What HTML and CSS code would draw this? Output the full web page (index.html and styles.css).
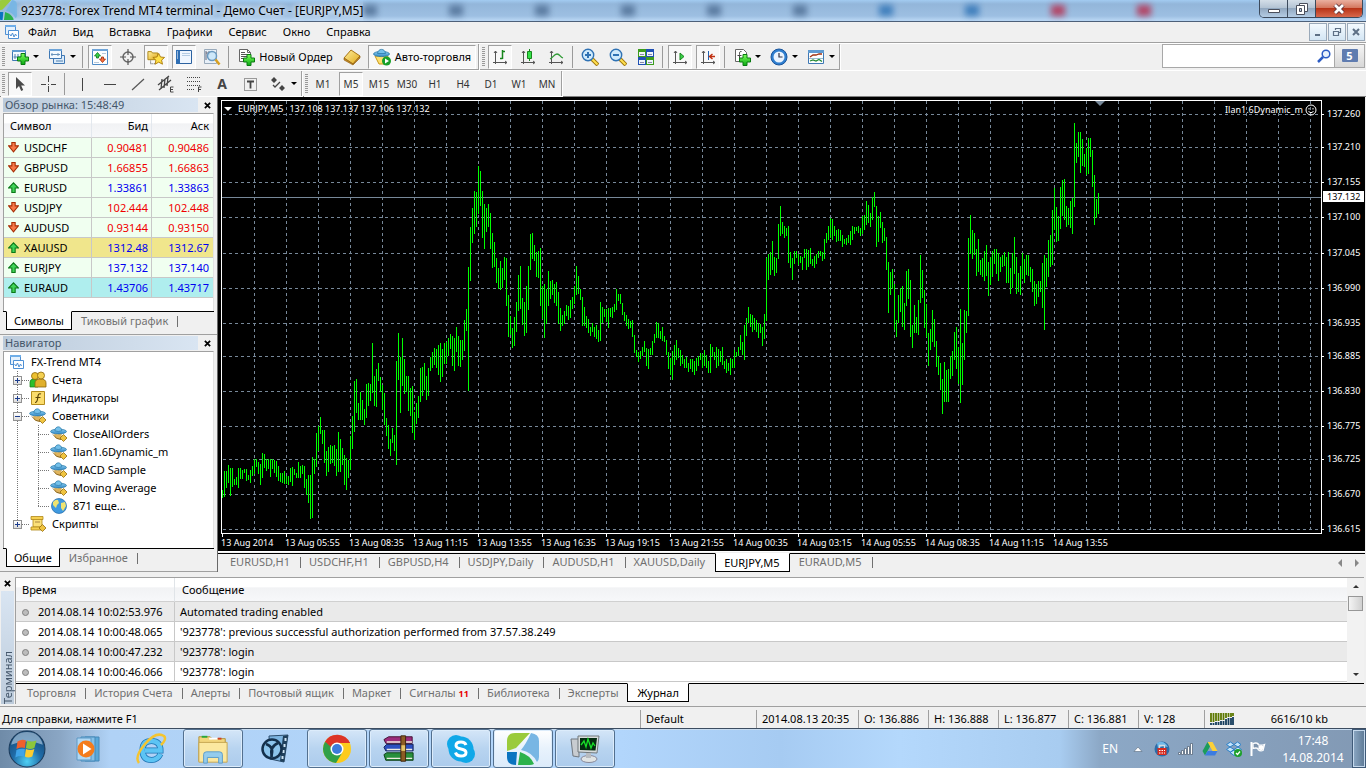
FILE: index.html
```html
<!DOCTYPE html>
<html lang="ru">
<head>
<meta charset="utf-8">
<title>923778: Forex Trend MT4 terminal</title>
<link rel="stylesheet" href="styles.css">
</head>
<body>
<svg class="sprite" aria-hidden="true">
  <defs>
    <linearGradient id="g-plus" x1="0" y1="0" x2="0" y2="1"><stop offset="0" stop-color="#7dff5a"/><stop offset="1" stop-color="#0aa814"/></linearGradient>
    <linearGradient id="g-gold" x1="0" y1="0" x2="1" y2="1"><stop offset="0" stop-color="#fff0a0"/><stop offset="1" stop-color="#e0a818"/></linearGradient>
    <linearGradient id="g-blue" x1="0" y1="0" x2="0" y2="1"><stop offset="0" stop-color="#8fd0f4"/><stop offset="1" stop-color="#2e86c4"/></linearGradient>
    <radialGradient id="g-orb" cx=".5" cy=".85" r=".8"><stop offset="0" stop-color="#4fd0f4"/><stop offset=".5" stop-color="#1f6ca8"/><stop offset="1" stop-color="#174a78"/></radialGradient>
  </defs>
  <symbol id="i-plus" viewBox="0 0 12 12"><path d="M4 .5h4V4h3.500v4H8v3.500H4V8H.5V4H4z" fill="url(#g-plus)" stroke="#087a10"/></symbol>
  <symbol id="i-newchart" viewBox="0 0 18 18"><path d="M1.500 2.500h13v10h-13z" fill="#f4faff" stroke="#3f78b4"/><path d="M1 2h14v2H1z" fill="#5f9ad0"/><path d="M4 6v5M2.500 9h9M7 6v3" stroke="#5080b0" fill="none"/><use href="#i-plus" x="6" y="5" width="12" height="12"/></symbol>
  <symbol id="i-profiles" viewBox="0 0 18 18"><path d="M5.500 7.500h11v8h-11z" fill="#dcecfa" stroke="#3f78b4"/><path d="M1.500 1.500h12v9h-12z" fill="#f4faff" stroke="#3f78b4"/><path d="M1 1h13v2H1z" fill="#6ea4d8"/><path d="M3 6.500h9M4 5v3M10 5v3" stroke="#6a94bc"/><path d="M8 13h7" stroke="#5080b0"/></symbol>
  <symbol id="i-watch" viewBox="0 0 18 18"><path d="M1.500 1.500h15v15h-15z" fill="#fdfeff" stroke="#4f8cc8"/><path d="M1 1h16v2H1z" fill="#6ea4d8"/><path d="M11 5.500h4M3 14.500h5" stroke="#b8c8d8"/><path d="M6.500 4.500L9.500 8h-2v2h-2V8h-2z" fill="#38d048" stroke="#0a7818" stroke-width=".8"/><path d="M11.500 14.500l3-3.500h-2V9h-2v2h-2z" fill="#f87040" stroke="#a02c08" stroke-width=".8"/></symbol>
  <symbol id="i-target" viewBox="0 0 18 18"><circle cx="9" cy="9" r="5" fill="none" stroke="#666" stroke-width="1.400"/><path d="M9 1v6M9 11v6M1 9h6M11 9h6" stroke="#555" stroke-width="1.200"/></symbol>
  <symbol id="i-star" viewBox="0 0 20 18"><path d="M1 3h4l1 1.500h6V12H1z" fill="url(#g-gold)" stroke="#a88010"/><path d="M4 13v4M4 16.500h6" stroke="#444" stroke-dasharray="1 1"/><path d="M13 5l2 4 4.500.5-3.300 3 1 4.500-4.200-2.300L9 17l.9-4.500-3.400-3L11 9z" fill="#ffe048" stroke="#a87808"/></symbol>
  <symbol id="i-terminal" viewBox="0 0 18 18"><path d="M1.500 2.500h15v13h-15z" fill="#eef6ff" stroke="#2c62a0"/><path d="M1 2h4v14H1z" fill="#2f6fb4"/><path d="M2 4h1M2 6h1M2 8h1M2 10h1" stroke="#fff"/><path d="M7 5.500h8M7 7.500h8" stroke="#b4cce4"/></symbol>
  <symbol id="i-tester" viewBox="0 0 18 18"><path d="M1.500 1.500h12v14h-12z" fill="#e8f0f8" stroke="#9ab" /><path d="M3 3v9M3 5h3M6 3v4" stroke="#667"/><circle cx="9" cy="8" r="4.500" fill="#c8e6fa" fill-opacity=".85" stroke="#6a9ac0" stroke-width="1.500"/><path d="M12.500 11.500l4 5" stroke="#d8a020" stroke-width="2.500"/></symbol>
  <symbol id="i-order" viewBox="0 0 18 18"><path d="M2.500 1.500h8l3 3v9h-11z" fill="#fff" stroke="#666"/><path d="M10.500 1.500v3h3" fill="none" stroke="#666"/><path d="M4 4.500h4M4 6.500h7M4 8.500h6M4 10.500h3" stroke="#555"/><use href="#i-plus" x="6" y="6" width="12" height="12"/></symbol>
  <symbol id="i-book" viewBox="0 0 18 18"><path d="M1 10l7-8 9 6-7 8z" fill="url(#g-gold)" stroke="#a87414"/><path d="M1 10v2l9 5 7-7V8l-7 8z" fill="#c88a20" stroke="#8a5c10" stroke-width=".6"/></symbol>
  <symbol id="i-auto" viewBox="0 0 18 18"><path d="M2 8h13l-4 8H6z" fill="#ffe070" stroke="#c89818"/><ellipse cx="8.500" cy="6" rx="8" ry="2.600" fill="url(#g-blue)" stroke="#2878a8" stroke-width=".8"/><path d="M4.500 5.500C5 0 12 0 12.500 5.500z" fill="#74c0ea" stroke="#2878a8" stroke-width=".8"/><circle cx="13.500" cy="13" r="4.500" fill="#18a028"/><path d="M12 10.500v5l4-2.500z" fill="#fff"/></symbol>
  <symbol id="i-bars" viewBox="0 0 18 18"><path d="M4.500 3v13M2 14.500h14M3 5l1.500-2L6 5M14 13l2 1.500-2 1.500" fill="none" stroke="#555"/><path d="M11.500 2v9M9 10.500h2.500M11.500 3.500H14" stroke="#18861c" fill="none" stroke-width="1.500"/></symbol>
  <symbol id="i-candles" viewBox="0 0 18 18"><path d="M4.500 3v13M2 14.500h14M3 5l1.500-2L6 5M14 13l2 1.500-2 1.500" fill="none" stroke="#555"/><path d="M10.500 1v12" stroke="#18861c"/><path d="M8.500 3.500h4v7h-4z" fill="#34e048" stroke="#18861c"/></symbol>
  <symbol id="i-line" viewBox="0 0 18 18"><path d="M4.500 3v13M2 14.500h14M3 5l1.500-2L6 5M14 13l2 1.500-2 1.500" fill="none" stroke="#555"/><path d="M3 11c3-1 4-5 7-5s3 3 6 4" fill="none" stroke="#2e9a34" stroke-width="1.300"/></symbol>
  <symbol id="i-zoomin" viewBox="0 0 18 18"><path d="M11 11l6 6" stroke="#a07810" stroke-width="4"/><path d="M11 11l5.500 5.500" stroke="#ffe050" stroke-width="2"/><circle cx="7" cy="7" r="5.700" fill="#cfeafc" stroke="#2f72b4" stroke-width="1.400"/><path d="M4 7h6M7 4v6" stroke="#2f72b4" stroke-width="2"/></symbol>
  <symbol id="i-zoomout" viewBox="0 0 18 18"><path d="M11 11l6 6" stroke="#a07810" stroke-width="4"/><path d="M11 11l5.500 5.500" stroke="#ffe050" stroke-width="2"/><circle cx="7" cy="7" r="5.700" fill="#cfeafc" stroke="#2f72b4" stroke-width="1.400"/><path d="M4 7h6" stroke="#2f72b4" stroke-width="2"/></symbol>
  <symbol id="i-tile" viewBox="0 0 18 18"><path d="M1 1h8v8H1zM9 9h8v8H9z" fill="#3c9c1c"/><path d="M9 1h8v8H9zM1 9h8v8H1z" fill="#1f50b4"/><path d="M2 4h6v4H2zM10 4h6v4h-6zM2 12h6v4H2zM10 12h6v4h-6z" fill="#eef4fa"/><path d="M3 6.500h4M11 6.500h4M3 14.500h4M11 14.500h4" stroke="#88a"/></symbol>
  <symbol id="i-scroll" viewBox="0 0 18 18"><path d="M4.500 3v13M2 14.500h14M3 5l1.500-2L6 5M14 13l2 1.500-2 1.500" fill="none" stroke="#555"/><path d="M9 5v7l4-3.500z" fill="#38d048" stroke="#18861c"/></symbol>
  <symbol id="i-shift" viewBox="0 0 18 18"><path d="M4.500 3v13M2 14.500h14M3 5l1.500-2L6 5M14 13l2 1.500-2 1.500" fill="none" stroke="#555"/><path d="M9.500 3v9" stroke="#2060b0"/><path d="M16 8.500h-5M13.500 6l-3 2.500 3 2.500" fill="none" stroke="#c03010" stroke-width="1.400"/></symbol>
  <symbol id="i-indic" viewBox="0 0 18 18"><path d="M2.500 1.500h8l3 3v9h-11z" fill="#fff" stroke="#666"/><path d="M8.500 3.500c-2-.5-2 1-2 3v5M4.500 7.500h4" fill="none" stroke="#444"/><use href="#i-plus" x="6" y="6" width="12" height="12"/></symbol>
  <symbol id="i-clock" viewBox="0 0 18 18"><circle cx="9" cy="9" r="8" fill="#2f7fd0" stroke="#1a559c"/><circle cx="9" cy="9" r="5.500" fill="#eaf4ff"/><path d="M9 5v4h3.500" fill="none" stroke="#334" stroke-width="1.200"/></symbol>
  <symbol id="i-template" viewBox="0 0 18 18"><path d="M1.500 2.500h15v13h-15z" fill="#fdfeff" stroke="#3f78b4"/><path d="M1 2h16v3H1z" fill="#5f9ad0"/><path d="M3 9l3-2h3l3-1h3" fill="none" stroke="#a03010" stroke-width="1.300"/><path d="M2 10.500h14" stroke="#9bc"/><path d="M3 13l3-1 3 1 3-1.500 3 2" fill="none" stroke="#208830" stroke-width="1.300"/></symbol>
  <symbol id="i-cursor" viewBox="0 0 18 18"><path d="M5 2v12l3-3 2.200 5 2-1-2-4.600H14z" fill="#4a4a4a"/></symbol>
  <symbol id="i-cross" viewBox="0 0 18 18"><path d="M9.500 1v6M9.500 11v6M2 9.500h5M12 9.500h5M9 9.500h1" stroke="#444"/></symbol>
  <symbol id="i-vline" viewBox="0 0 18 18"><path d="M9.500 3v13" stroke="#444"/></symbol>
  <symbol id="i-hline" viewBox="0 0 18 18"><path d="M3 9.500h12" stroke="#444"/></symbol>
  <symbol id="i-trend" viewBox="0 0 18 18"><path d="M3 15L15 4" stroke="#555" stroke-width="1.200"/></symbol>
  <symbol id="i-channel" viewBox="0 0 18 18"><path d="M1 10L12 1M2 15L14 5M5 4l-1 10M8 4L7 13M11 2l-1 9" stroke="#444" stroke-width="1.300"/><path d="M16.500 12h-3v5h3M13.500 14.500h2.500" fill="none" stroke="#444"/></symbol>
  <symbol id="i-fibo" viewBox="0 0 18 18"><path d="M2 2.500h13M2 6.500h13M2 10.500h13M2 14.500h8" stroke="#444" stroke-dasharray="1 1"/><path d="M16.500 12h-3v5M13.500 14.500h2.500" fill="none" stroke="#444"/></symbol>
  <symbol id="i-label" viewBox="0 0 18 18"><path d="M3.500 3.500h12v12h-12z" fill="none" stroke="#444" stroke-dasharray="1 1"/><path d="M6 6.500h7M9.500 6v7.500" stroke="#444" stroke-width="1.800"/></symbol>
  <symbol id="i-arrows" viewBox="0 0 18 18"><path d="M5 2l3 3-3 3-3-3zM13 10l3 3-3 3-3-3z" fill="#444"/><path d="M4 10l2 2 5-5" fill="none" stroke="#444" stroke-width="1.300"/></symbol>
  <symbol id="i-mt" viewBox="0 0 16 16"><path d="M1.500 1.500h10v9h-10z" fill="#e4f1fd" stroke="#4f90d4"/><path d="M1 1h11v2H1z" fill="#6faee8"/><path d="M4.500 6.500h10v8h-10z" fill="#fff" stroke="#4f90d4"/><path d="M5.500 10l1.500 2 1.500-3 1.500 4 1.500-3 1 2" fill="none" stroke="#4f90d4"/></symbol>
  <symbol id="i-trendlogo" viewBox="0 0 32 32"><path d="M8 0h15L9 15 0 18V8Q0 0 8 0z" fill="#9acb3c"/><path d="M24 0q8 1 8 8v16q0 3-2 5Q25 19 14 17 19 11 24 0z" fill="#78b6e4"/><path d="M0 19h10l-1 13Q0 32 0 24z" fill="#0a74c0"/><path d="M13 19q10 3 14 12-2 1-4 1H11z" fill="#2cb24c"/></symbol>
  <symbol id="i-down" viewBox="0 0 10 10"><path d="M3.500 .5h3v3h3L5 9 .5 3.500h3z" fill="#f87848" stroke="#a83008"/></symbol>
  <symbol id="i-up" viewBox="0 0 10 10"><path d="M3.500 9.500h3v-4h3L5 .8.500 5.500h3z" fill="#40d458" stroke="#0a7818"/></symbol>
  <symbol id="i-people" viewBox="0 0 18 18"><path d="M1 16v-5q0-3 4-3t4 3v5z" fill="#2cc02c" stroke="#147814" stroke-width=".7"/><circle cx="6" cy="5" r="3.500" fill="#ecc030" stroke="#8c6408" stroke-width=".8"/><path d="M6 16v-4q0-4 5.500-4t5.500 4v4z" fill="#e0b02c" stroke="#8c6408" stroke-width=".8"/><circle cx="12" cy="4.500" r="3.500" fill="#f4d050" stroke="#8c6408" stroke-width=".8"/></symbol>
  <symbol id="i-func" viewBox="0 0 18 18"><path d="M2.500 2.500h13v13h-13z" fill="#fbdc6c" stroke="#b48c1c"/><path d="M12 5c-2.500-1-3 1-3.300 4S8 13.500 6 13.500M6.500 8.500h5" fill="none" stroke="#5c4408" stroke-width="1.200"/></symbol>
  <symbol id="i-expert" viewBox="0 0 18 18"><path d="M4 8.500q5 2 8-1l-1 7q-4 .5-6-2z" fill="#e0b45c"/><path d="M3 9.500q3 5 8 5" fill="none" stroke="#8c6a28"/><ellipse cx="8.500" cy="6.500" rx="8" ry="2.400" fill="url(#g-blue)" stroke="#2878a8" stroke-width=".7"/><path d="M4.800 5.800C5.200 .5 11.300 .5 11.800 5.800q-3.500 1.400-7 0z" fill="#74c0ea" stroke="#2878a8" stroke-width=".7"/><path d="M13.500 9.500L17 13l-3.500 3.500L10 13z" fill="#f0c440" stroke="#946c0c" stroke-width=".8"/></symbol>
  <symbol id="i-globe" viewBox="0 0 18 18"><circle cx="9" cy="9" r="7.500" fill="#3f9ae0" stroke="#2068a8" stroke-width=".7"/><path d="M3 5q3-3 5-2l1 3-2 2-1 3-3-3zM11 6l4-1 1 4-3 5-2-3z" fill="#f0e470"/></symbol>
  <symbol id="i-script" viewBox="0 0 18 18"><path d="M4 3h9v9H4z" fill="#fbe078" stroke="#b08818" stroke-width=".8"/><path d="M2 1.500h12v3H2zM2 12h10v3H2z" fill="#f6d050" stroke="#b08818" stroke-width=".8"/><path d="M6 7h5" stroke="#a84"/><path d="M13.500 9.500L17 13l-3.500 3.500L10 13z" fill="#f0c440" stroke="#946c0c" stroke-width=".8"/></symbol>
  <symbol id="i-x" viewBox="0 0 8 8"><path d="M1 1l6 6M7 1L1 7" stroke="currentColor" stroke-width="2"/></symbol>
  <symbol id="i-orb" viewBox="0 0 36 36"><circle cx="18" cy="18" r="17" fill="url(#g-orb)" stroke="#1c3c5c"/><path d="M3 14Q6 2 18 2t15 12Q18 8 3 14z" fill="#cfe4f4" fill-opacity=".55"/><path d="M9 11q4-3 8-1l-1 7q-4-1-8 1z" fill="#f0602c"/><path d="M18 10q4 2 9 0l-2 7q-4 2-8 0z" fill="#8cc63c"/><path d="M8 19q4-2 8-1l-1 7q-4-1-8 1z" fill="#3fa4e8"/><path d="M17 18q4 2 8 0l-2 7q-4 2-7 0z" fill="#fccc30"/></symbol>
  <symbol id="i-media" viewBox="0 0 32 32"><path d="M12 4h14v24H12z" fill="#5aa8d8" stroke="#4488b8"/><path d="M8 4h14v24H8z" fill="#84c0e8" stroke="#4488b8"/><path d="M4 5h14v22H4z" fill="#b0d8f4" stroke="#5c98c4"/><circle cx="13" cy="16" r="8.500" fill="#f47c1c"/><path d="M10 10.500v11l8.500-5.500z" fill="#fff"/></symbol>
  <symbol id="i-ie" viewBox="0 0 32 32"><path d="M25.500 21q-3 6-9 6-9 0-9-10 0-9 9-9 9 0 9 9.500H10" fill="none" stroke="#1c74b4" stroke-width="6"/><path d="M25.500 21q-3 6-9 6-9 0-9-10 0-9 9-9 9 0 9 9.500H10" fill="none" stroke="#5cc4f4" stroke-width="4.500"/><path d="M4 30Q-1 24 10 11T29 3q3 3-3 9" fill="none" stroke="#f4c430" stroke-width="2.500"/></symbol>
  <symbol id="i-folder" viewBox="0 0 34 34"><path d="M2 4h12l2 2h14v24H2z" fill="#f2d67c" stroke="#b09038"/><path d="M5 3h6v2H5z" fill="#28a838"/><path d="M13 5h9v2h-9z" fill="#fff"/><path d="M22 5h4v2h-4z" fill="#d04020"/><path d="M2 10h30v21H2z" fill="#fbe8a0" stroke="#c4a450"/><path d="M7 32V23q0-3 3-3h14q3 0 3 3v9h-4v-6H11v6z" fill="#94ccec" stroke="#5c9cc8"/></symbol>
  <symbol id="i-film" viewBox="0 0 32 32"><path d="M10 3l19-1-4 27-14-3z" fill="#7cb4e0" stroke="#2c4c6c"/><path d="M24 3l5-1-4 27-4-1z" fill="#20405c"/><path d="M26.500 5v3M25.500 11v3M24.500 17v3M23.500 23v3" stroke="#cfe4f4" stroke-width="2"/><circle cx="13" cy="16" r="9.500" fill="#8cc4ec" stroke="#14304c" stroke-width="2.500"/><path d="M7 11q9 3 5 13M19 10q-9 4-6 14" fill="none" stroke="#14304c" stroke-width="2.500"/></symbol>
  <symbol id="i-chrome" viewBox="0 0 32 32"><circle cx="16" cy="16" r="14" fill="#fccb1c"/><path d="M3.900 9A14 14 0 0 0 15 30l6-10-5-4z" fill="#30a048"/><path d="M3.900 9A14 14 0 0 1 29 10H16z" fill="#dc3428"/><path d="M3.900 9L10 18l6-8z" fill="#30a048"/><path d="M8 6q8-6 17 0l4 4H16q-5 0-6 4L4.500 9z" fill="#dc3428"/><circle cx="16" cy="16" r="6.500" fill="#fff"/><circle cx="16" cy="16" r="5" fill="#3c7cdc"/></symbol>
  <symbol id="i-rar" viewBox="0 0 34 32"><path d="M1 6l5-3h25v7H3z" fill="#9c2c7c" stroke="#401030"/><path d="M1 14l3-3h28v7H3z" fill="#2c50c0" stroke="#101c50"/><path d="M1 22l3-2h28v8H3z" fill="#28903c" stroke="#0c3c14"/><path d="M4 8.500h27M4 16.500h27M4 26h27" stroke="#f0ece0" stroke-width="1.500"/><path d="M19 2h5v27h-5z" fill="#8c5c24" stroke="#3c240c"/><path d="M19.500 12h4v6h-4z" fill="#e4c468"/></symbol>
  <symbol id="i-skype" viewBox="0 0 32 32"><circle cx="11" cy="11" r="9" fill="#10a8e8"/><circle cx="21" cy="21" r="9" fill="#10a8e8"/><circle cx="16" cy="16" r="12.500" fill="#10a8e8"/><path d="M21 12q-1-3-5-3-5 0-5 3.500 0 2.500 5 3.500t5 3.500q0 3.500-5 3.500-4.500 0-5.500-3.500" fill="none" stroke="#fff" stroke-width="3"/></symbol>
  <symbol id="i-pc" viewBox="0 0 32 32"><path d="M2 6h8v18l-6-1z" fill="#c8ccd0" stroke="#707880"/><path d="M9 3h21l-2 17-19-1z" fill="#d8dcdc" stroke="#70787c"/><path d="M11 5h17l-1.500 12.500L11 17z" fill="#042c10"/><path d="M12 12l3-4 2 6 2-8 3 9 2-5 2 3" fill="none" stroke="#18e028" stroke-width="1.300"/><ellipse cx="20" cy="26" rx="8" ry="3.500" fill="#e0e4e4" stroke="#889"/><path d="M17 20h5v5h-5z" fill="#b8bcc0"/></symbol>
</svg>

<header class="titlebar">
  <svg class="title-logo" viewBox="0 0 32 32" aria-hidden="true"><use href="#i-trendlogo"/></svg>
  <h1 class="title-text">923778: Forex Trend MT4 terminal - Демо Счет - [EURJPY,M5]</h1>
  <div class="glass" aria-hidden="true"><i></i><i></i><i></i><i></i><i></i><i></i><i class="azure"></i><i class="azure"></i><i class="red"></i><i class="red"></i></div>
  <div class="window-buttons">
    <button aria-label="Свернуть"><svg width="14" height="12" viewBox="0 0 14 12"><path d="M1.500 6.500h11v3h-11z" fill="#fff" stroke="#4a4f5c"/></svg></button>
    <button aria-label="Окно"><svg width="14" height="14" viewBox="0 0 14 14"><path d="M4.500 1.500h8v8h-8z" fill="#fff" stroke="#4a4f5c"/><path d="M1.500 3.500h8v9h-8z" fill="#fff" stroke="#4a4f5c"/><path d="M4.500 6.500h2v3h-2z" fill="#b8cce0" stroke="#4a4f5c"/></svg></button>
    <button class="close" aria-label="Закрыть"><svg width="14" height="12" viewBox="0 0 14 12"><path d="M3 2l8 8M11 2l-8 8" stroke="#5a3038" stroke-width="4.500"/><path d="M3 2l8 8M11 2l-8 8" stroke="#fff" stroke-width="2.800"/></svg></button>
  </div>
</header>

<nav class="menubar">
  <svg class="menu-icon" aria-hidden="true"><use href="#i-mt"/></svg>
  <button>Файл</button><button>Вид</button><button>Вставка</button><button>Графики</button><button>Сервис</button><button>Окно</button><button>Справка</button>
  <div class="mdi">
    <button aria-label="Свернуть окно"><svg width="10" height="10" viewBox="0 0 10 10"><path d="M2 8h5" stroke="#5e7085" stroke-width="2"/></svg></button>
    <button aria-label="Восстановить окно"><svg width="10" height="10" viewBox="0 0 10 10"><path d="M3.500 3V1.500h5v4H7M1.500 4.500h5v4h-5zM1 4.500h6M3 1.500h6" fill="none" stroke="#5e7085" stroke-width="1.200"/></svg></button>
    <button aria-label="Закрыть окно"><svg width="10" height="10" viewBox="0 0 10 10"><path d="M2 2l6 6M8 2L2 8" stroke="#5e7085" stroke-width="2"/></svg></button>
  </div>
</nav>

<div class="toolrow">
  <div class="toolbar">
    <span class="grip"></span>
    <button class="tool drop" aria-label="Новый график"><svg><use href="#i-newchart"/></svg></button>
    <button class="tool drop" aria-label="Профили"><svg><use href="#i-profiles"/></svg></button>
    <span class="sep"></span>
    <button class="tool on" aria-label="Обзор рынка"><svg><use href="#i-watch"/></svg></button>
    <button class="tool" aria-label="Окно данных"><svg><use href="#i-target"/></svg></button>
    <button class="tool on" aria-label="Навигатор"><svg><use href="#i-star"/></svg></button>
    <button class="tool on" aria-label="Терминал"><svg><use href="#i-terminal"/></svg></button>
    <button class="tool" aria-label="Тестер"><svg><use href="#i-tester"/></svg></button>
    <span class="sep"></span>
    <button class="tool wide order"><svg><use href="#i-order"/></svg>Новый Ордер</button>
    <button class="tool" aria-label="MetaEditor"><svg><use href="#i-book"/></svg></button>
    <button class="tool wide auto on"><svg><use href="#i-auto"/></svg>Авто-торговля</button>
  </div>
  <div class="toolbar">
    <span class="grip"></span>
    <button class="tool on" aria-label="Бары"><svg><use href="#i-bars"/></svg></button>
    <button class="tool" aria-label="Свечи"><svg><use href="#i-candles"/></svg></button>
    <button class="tool" aria-label="Линия"><svg><use href="#i-line"/></svg></button>
    <span class="sep"></span>
    <button class="tool" aria-label="Увеличить"><svg><use href="#i-zoomin"/></svg></button>
    <button class="tool" aria-label="Уменьшить"><svg><use href="#i-zoomout"/></svg></button>
    <button class="tool" aria-label="Мозаика"><svg><use href="#i-tile"/></svg></button>
    <span class="sep"></span>
    <button class="tool on" aria-label="Автопрокрутка"><svg><use href="#i-scroll"/></svg></button>
    <button class="tool on" aria-label="Сдвиг"><svg><use href="#i-shift"/></svg></button>
    <span class="sep"></span>
    <button class="tool drop" aria-label="Индикаторы"><svg><use href="#i-indic"/></svg></button>
    <button class="tool drop" aria-label="Периоды"><svg><use href="#i-clock"/></svg></button>
    <button class="tool drop" aria-label="Шаблоны"><svg><use href="#i-template"/></svg></button>
  </div>
  <form class="search">
    <input type="text" aria-label="Поиск">
    <svg class="search-icon" width="14" height="14" viewBox="0 0 14 14" aria-hidden="true"><circle cx="9" cy="5" r="3.800" fill="#e8f2fc" stroke="#2c5cc4" stroke-width="1.500"/><path d="M6 8l-5 5" stroke="#2c5cc4" stroke-width="2.500"/></svg>
    <button class="chat" type="button"><span>5</span></button>
  </form>
</div>

<div class="toolrow second">
  <div class="toolbar">
    <span class="grip"></span>
    <button class="tool on" aria-label="Курсор"><svg><use href="#i-cursor"/></svg></button>
    <button class="tool" aria-label="Перекрестие"><svg><use href="#i-cross"/></svg></button>
    <span class="sep"></span>
    <button class="tool" aria-label="Вертикальная линия"><svg><use href="#i-vline"/></svg></button>
    <button class="tool" aria-label="Горизонтальная линия"><svg><use href="#i-hline"/></svg></button>
    <button class="tool" aria-label="Трендовая линия"><svg><use href="#i-trend"/></svg></button>
    <button class="tool" aria-label="Канал"><svg><use href="#i-channel"/></svg></button>
    <button class="tool" aria-label="Фибоначчи"><svg><use href="#i-fibo"/></svg></button>
    <button class="tool letter">A</button>
    <button class="tool" aria-label="Метка"><svg><use href="#i-label"/></svg></button>
    <button class="tool drop" aria-label="Стрелки"><svg><use href="#i-arrows"/></svg></button>
  </div>
  <div class="toolbar periods">
    <span class="grip"></span>
    <button class="tool">M1</button><button class="tool on">M5</button><button class="tool">M15</button><button class="tool">M30</button><button class="tool">H1</button><button class="tool">H4</button><button class="tool">D1</button><button class="tool">W1</button><button class="tool">MN</button>
  </div>
</div>

<main class="workspace">
  <aside class="sidebar">
    <section class="panel market">
      <div class="panel-head"><h2>Обзор рынка: 15:48:49</h2><button aria-label="Закрыть обзор рынка"><svg><use href="#i-x"/></svg></button></div>
      <div class="panel-body">
        <table class="quotes">
          <thead><tr><th>Символ</th><th>Бид</th><th>Аск</th></tr></thead>
          <tbody>
            <tr class="down"><td><svg><use href="#i-down"/></svg>USDCHF</td><td>0.90481</td><td>0.90486</td></tr>
            <tr class="down"><td><svg><use href="#i-down"/></svg>GBPUSD</td><td>1.66855</td><td>1.66863</td></tr>
            <tr><td><svg><use href="#i-up"/></svg>EURUSD</td><td>1.33861</td><td>1.33863</td></tr>
            <tr class="down"><td><svg><use href="#i-down"/></svg>USDJPY</td><td>102.444</td><td>102.448</td></tr>
            <tr class="down"><td><svg><use href="#i-down"/></svg>AUDUSD</td><td>0.93144</td><td>0.93150</td></tr>
            <tr class="khaki"><td><svg><use href="#i-up"/></svg>XAUUSD</td><td>1312.48</td><td>1312.67</td></tr>
            <tr><td><svg><use href="#i-up"/></svg>EURJPY</td><td>137.132</td><td>137.140</td></tr>
            <tr class="aqua"><td><svg><use href="#i-up"/></svg>EURAUD</td><td>1.43706</td><td>1.43717</td></tr>
          </tbody>
        </table>
      </div>
      <div class="tabs" role="tablist"><button role="tab" aria-selected="true">Символы</button><button role="tab">Тиковый график</button></div>
    </section>
    <section class="panel navigator">
      <div class="panel-head"><h2>Навигатор</h2><button aria-label="Закрыть навигатор"><svg><use href="#i-x"/></svg></button></div>
      <div class="panel-body">
        <div class="node root"><svg><use href="#i-mt"/></svg>FX-Trend MT4</div>
        <ul class="branch">
          <li><div class="node"><button class="expander plus" aria-label="Развернуть"></button><i class="stem"></i><svg><use href="#i-people"/></svg>Счета</div></li>
          <li><div class="node"><button class="expander plus" aria-label="Развернуть"></button><i class="stem"></i><svg><use href="#i-func"/></svg>Индикаторы</div></li>
          <li><div class="node"><button class="expander" aria-label="Свернуть"></button><i class="stem"></i><svg><use href="#i-expert"/></svg>Советники</div>
            <ul class="branch leaf">
              <li class="node"><i class="stem"></i><svg><use href="#i-expert"/></svg>CloseAllOrders</li>
              <li class="node"><i class="stem"></i><svg><use href="#i-expert"/></svg>Ilan1.6Dynamic_m</li>
              <li class="node"><i class="stem"></i><svg><use href="#i-expert"/></svg>MACD Sample</li>
              <li class="node"><i class="stem"></i><svg><use href="#i-expert"/></svg>Moving Average</li>
              <li class="node"><i class="stem"></i><svg><use href="#i-globe"/></svg>871 еще...</li>
            </ul>
          </li>
          <li><div class="node"><button class="expander plus" aria-label="Развернуть"></button><i class="stem"></i><svg><use href="#i-script"/></svg>Скрипты</div></li>
        </ul>
      </div>
      <div class="tabs" role="tablist"><button role="tab" aria-selected="true">Общие</button><button role="tab">Избранное</button></div>
    </section>
  </aside>

  <section class="chart-column">
    <div class="chart">
      <div class="chart-body">
        <div class="plot">
          <svg id="plot" role="img" aria-label="График EURJPY, M5"></svg>
          <div class="chart-title"><i></i><span>EURJPY,M5</span><span>137.108 137.137 137.106 137.132</span></div>
          <div class="chart-expert">Ilan1.6Dynamic_m<svg width="12" height="12" viewBox="0 0 12 12"><circle cx="6" cy="6" r="5" fill="none" stroke="#fff"/><path d="M4 4v1.500M8 4v1.500M3.500 7.500q2.500 2.500 5 0" fill="none" stroke="#fff"/></svg></div>
        </div>
        <svg id="prices" class="prices"></svg>
      </div>
      <ol class="times"><li>13 Aug 2014</li><li>13 Aug 05:55</li><li>13 Aug 08:35</li><li>13 Aug 11:15</li><li>13 Aug 13:55</li><li>13 Aug 16:35</li><li>13 Aug 19:15</li><li>13 Aug 21:55</li><li>14 Aug 00:35</li><li>14 Aug 03:15</li><li>14 Aug 05:55</li><li>14 Aug 08:35</li><li>14 Aug 11:15</li><li>14 Aug 13:55</li></ol>
    </div>
    <div class="tabs chart-tabs" role="tablist">
      <button role="tab">EURUSD,H1</button><button role="tab">USDCHF,H1</button><button role="tab">GBPUSD,H4</button><button role="tab">USDJPY,Daily</button><button role="tab">AUDUSD,H1</button><button role="tab">XAUUSD,Daily</button><button role="tab" aria-selected="true">EURJPY,M5</button><button role="tab">EURAUD,M5</button>
      <span class="tab-scroll"><i class="left"></i><i class="right"></i></span>
    </div>
  </section>
</main>

<section class="terminal">
  <div class="terminal-side"><button aria-label="Закрыть терминал"><svg><use href="#i-x"/></svg></button><h2>Терминал</h2></div>
  <div class="terminal-main">
    <div class="log-area">
      <table class="log">
        <thead><tr><th>Время</th><th>Сообщение</th></tr></thead>
        <tbody>
          <tr><td><i class="dot"></i>2014.08.14 10:02:53.976</td><td>Automated trading enabled</td></tr>
          <tr><td><i class="dot"></i>2014.08.14 10:00:48.065</td><td>'923778': previous successful authorization performed from 37.57.38.249</td></tr>
          <tr><td><i class="dot"></i>2014.08.14 10:00:47.232</td><td>'923778': login</td></tr>
          <tr><td><i class="dot"></i>2014.08.14 10:00:46.066</td><td>'923778': login</td></tr>
        </tbody>
      </table>
      <div class="scrollbar" aria-hidden="true"><i class="arrow-up"></i><i class="thumb"></i><i class="arrow-down"></i></div>
    </div>
    <div class="tabs terminal-tabs" role="tablist">
      <button role="tab">Торговля</button><button role="tab">История Счета</button><button role="tab">Алерты</button><button role="tab">Почтовый ящик</button><button role="tab">Маркет</button><button role="tab">Сигналы <b>11</b></button><button role="tab">Библиотека</button><button role="tab">Эксперты</button><button role="tab" aria-selected="true">Журнал</button>
    </div>
  </div>
</section>

<footer class="status">
  <span class="help">Для справки, нажмите F1</span>
  <span class="profile">Default</span>
  <span class="date">2014.08.13 20:35</span>
  <span class="price">O: 136.886</span>
  <span class="price">H: 136.888</span>
  <span class="price">L: 136.877</span>
  <span class="price">C: 136.881</span>
  <span class="volume">V: 128</span>
  <span class="traffic"><svg width="24" height="12" viewBox="0 0 24 12" aria-hidden="true"><path d="M1 0v9M3.500 0v9M6 0v8M8.500 0v8M11 0v7M13.500 0v7M16 0v5M18.500 0v4M21 0v4M23 0v3" stroke="#5c7800" stroke-width="1.800"/><path d="M1 10v2M3.500 10v2M6 9v3M8.500 9v3M11 8v4M13.500 8v4M16 6v6M18.500 5v7M21 5v7M23 4v8" stroke="#143c5c" stroke-width="1.800"/></svg><span>6616/10 kb</span></span>
</footer>

<div class="taskbar">
  <button class="task start" aria-label="Пуск"><svg><use href="#i-orb"/></svg></button>
  <button class="task" aria-label="Медиаплеер"><svg><use href="#i-media"/></svg></button>
  <button class="task" aria-label="Internet Explorer"><svg><use href="#i-ie"/></svg></button>
  <button class="task open" aria-label="Проводник"><svg><use href="#i-folder"/></svg></button>
  <button class="task" aria-label="Видео"><svg><use href="#i-film"/></svg></button>
  <button class="task open" aria-label="Chrome"><svg><use href="#i-chrome"/></svg></button>
  <button class="task open" aria-label="WinRAR"><svg><use href="#i-rar"/></svg></button>
  <button class="task open" aria-label="Skype"><svg><use href="#i-skype"/></svg></button>
  <button class="task open active" aria-label="Forex Trend MT4"><svg><use href="#i-trendlogo"/></svg></button>
  <button class="task open" aria-label="Диспетчер"><svg><use href="#i-pc"/></svg></button>
  <div class="tray">
    <span class="lang">EN</span>
    <svg class="tray-more" width="10" height="6" viewBox="0 0 10 6"><path d="M1 5.500L5 1l4 4.500z" fill="#fff" stroke="#56697e" stroke-width=".6"/></svg>
    <svg width="16" height="16" viewBox="0 0 16 16"><circle cx="8" cy="8" r="7.500" fill="#2c6ca8"/><path d="M3 2q5-3 9 1l2 3-5-1-5 2z" fill="#70b8e8"/><path d="M3.500 7h9v7h-9z" fill="#d82c20"/><path d="M5.500 7V4.500h5V7" fill="none" stroke="#d8dce0" stroke-width="1.300"/><path d="M5 9.500h6M5 12h6" stroke="#fff" stroke-dasharray="1.500 1"/></svg>
    <svg width="16" height="16" viewBox="0 0 16 16"><path d="M.5 11.500h2v2h-2zM3.500 9.500h2v4h-2zM6.500 7.500h2v6h-2zM9.500 5.500h2v8h-2zM12.500 2.500h2v11h-2z" fill="#fff" stroke="#4a5c70" stroke-width=".7"/></svg>
    <svg width="16" height="16" viewBox="0 0 16 16"><path d="M5.500 1h5l5 9h-5z" fill="#fcd038"/><path d="M5.500 1L8 5.500 3 14.500.5 10z" fill="#1c9c5c"/><path d="M5.500 10h10L13 14.500H3z" fill="#3c7ce0"/></svg>
    <svg width="16" height="16" viewBox="0 0 16 16"><path d="M4.500 1L8 3.500 4 6 .5 3.500zM11.500 1L15 3.500 12 6 8 3.500zM4 6l4 2.500L4.500 11 .5 8.500zM12 6l3.500 2.500L12 11 8 8.500zM4 11.500l4-2.500 4 2.500-4 3z" fill="#c4e4fa" stroke="#2c80c8"/><circle cx="12" cy="12" r="4" fill="#1ca02c"/><path d="M10 12l1.500 1.500L14 10.500" fill="none" stroke="#fff" stroke-width="1.300"/></svg>
    <svg width="16" height="16" viewBox="0 0 16 16"><path d="M1.500 1v14" stroke="#fff" stroke-width="2"/><path d="M3 2.500q3-1 5 0v1q3 1.500 6.500 0L13 9.500q-3 1-5-1V7.500q-2-1-5 0z" fill="#7d93ac" stroke="#fff" stroke-width="1.300"/><path d="M8.500 4q3 1.500 5.500.5L12.500 9q-2 .5-4-1z" fill="#fff"/></svg>
    <div class="clock"><time>17:48</time><time>14.08.2014</time></div>
  </div>
  <button class="show-desktop" aria-label="Показать рабочий стол"></button>
</div>
<script src="chart.js"></script>
</body>
</html>
```
FILE: styles.css
```css
* { box-sizing: border-box; }
body {
  margin: 0;
  height: 100vh;
  display: flex;
  flex-direction: column;
  overflow: hidden;
  background: #f0f0f0;
  color: #000;
  font: 11px/14px "Noto Sans", sans-serif;
}
button, input { font: inherit; color: inherit; margin: 0; padding: 0; border: 0; background: none; }
h1, h2, ul, ol { margin: 0; padding: 0; font: inherit; list-style: none; }
.sprite { position: absolute; width: 0; height: 0; }

/* Title bar */
.titlebar {
  flex: none;
  height: 22px;
  display: flex;
  border-bottom: 1px solid #4d6079;
  background: linear-gradient(#a2cbf1 0, #93b6da 4px, #9dbfe2 16px, #b6d4f2 20px);
}
.title-logo { flex: none; width: 20px; height: 20px; margin-left: -3px; }
.title-text {
  margin-left: 4px;
  font-size: 12px;
  line-height: 21px;
  white-space: nowrap;
  text-shadow: 0 0 6px #fff, 0 0 8px #fff;
}
.glass { flex: 1; display: flex; align-items: center; gap: 72px; min-width: 0; overflow: hidden; }
.glass i { flex: none; width: 14px; height: 11px; background: #4c6c92; filter: blur(3px); opacity: .8; }
.glass .azure { background: #2a70b4; }
.glass .red { background: #b82848; }
.window-buttons { display: flex; height: 18px; margin-right: 3px; border: 1px solid #3c4a5c; border-top: 0; border-radius: 0 0 5px 5px; overflow: hidden; }
.window-buttons button { display: flex; align-items: center; justify-content: center; width: 28px; border-right: 1px solid #3c4a5c; background: linear-gradient(#d4dee8, #b4c4d4 45%, #92a8c0 50%, #b4cce4); }
.window-buttons .close { width: 46px; border-right: 0; background: linear-gradient(#eab0a0, #d47860 45%, #b83418 50%, #d8684c); }

/* Menu */
.menubar { flex: none; display: flex; align-items: center; height: 21px; padding-left: 4px; border-bottom: 1px solid #a0a0a0; }
.menu-icon { width: 16px; height: 16px; }
.menubar > button { padding: 0 8px; line-height: 20px; }
.mdi { display: flex; gap: 1px; margin-left: auto; margin-right: 1px; }
.mdi button { display: flex; align-items: center; justify-content: center; width: 18px; height: 18px; border: 1px solid #9aa9b9; background: linear-gradient(#f4fafe, #d4e6f4); }

/* Toolbars */
.toolrow { flex: none; display: flex; height: 27px; border-top: 1px solid #fff; }
.toolbar { display: flex; align-items: center; gap: 4px; padding: 0 2px; border-right: 1px solid #a0a0a0; border-bottom: 1px solid #a0a0a0; box-shadow: 1px 1px #fff; }
.toolbar + .toolbar { margin-left: 1px; }
.second { border-bottom: 1px solid #808080; }
.second .toolbar { border-bottom: 0; }
.grip { width: 3px; height: 20px; margin-right: -1px; background: repeating-linear-gradient(#999 0 1px, #f0f0f0 1px 2px); }
.sep { width: 1px; height: 22px; margin-right: 1px; background: #9a9a9a; }
.tool { display: flex; align-items: center; justify-content: center; width: 24px; height: 24px; border: 1px solid transparent; white-space: nowrap; }
.tool svg { flex: none; width: 18px; height: 18px; }
.tool.on { border-color: #a0a0a0 #fff #fff #a0a0a0; background: #f8f8f8; }
.drop { width: 33px; justify-content: flex-start; padding-left: 2px; gap: 4px; }
.drop::after { content: ""; border: 3px solid transparent; border-top-color: #000; border-bottom: 0; }
.wide { gap: 4px; }
.order { width: 102px; }
.auto { width: 108px; }
.letter { color: #444; font-size: 14px; font-weight: bold; }
.periods .tool { color: #333; font-size: 10px; }
.search { display: flex; align-items: center; margin-left: auto; margin-right: 1px; align-self: flex-start; border: 1px solid #a8a8a8; background: #fff; }
.search input { width: 154px; height: 22px; outline: none; }
.search-icon { margin-right: 3px; }
.chat { width: 30px; height: 22px; border-left: 1px solid #a8a8a8; background: linear-gradient(#f4f4f4, #d8d8d8); }
.chat span { display: inline-block; width: 16px; height: 13px; background: #5f7cb0; color: #fff; font-weight: bold; line-height: 13px; border-radius: 1px; }

/* Main layout */
.workspace { flex: 1; display: flex; min-height: 0; }
.sidebar { display: flex; flex-direction: column; width: 217px; }
.panel { display: flex; flex-direction: column; padding: 1px 3px 3px; border-bottom: 1px solid #a0a0a0; }
.market { height: 238px; }
.navigator { flex: 1; min-height: 0; }
.panel-head { display: flex; align-items: center; height: 14px; }
.panel-head h2 { flex: 1; margin-right: 3px; padding-left: 2px; color: #44566a; background: linear-gradient(90deg, #bccbdb, #d9e5f2); }
.panel-head button { width: 13px; height: 14px; }
.panel-head svg, .terminal-side svg { width: 7px; height: 7px; }
.panel-body { flex: 1; min-height: 0; margin-top: 1px; border: 1px solid #a0a0a0; border-right-color: #e3e3e3; border-bottom: 0; background: #fff; }

table { border-collapse: separate; border-spacing: 0; table-layout: fixed; width: 100%; }
th { height: 24px; padding: 0; font-weight: normal; text-align: left; background: linear-gradient(#fff 40%, #f1f2f4 42%, #f7f8fa); border-bottom: 1px solid #d0d0d0; }
td { height: 20px; padding: 0; border-bottom: 1px solid #c8c8c8; white-space: nowrap; }
.quotes th:nth-child(2), .quotes td:nth-child(2) { width: 60px; padding-right: 3px; text-align: right; }
.quotes th:nth-child(3), .quotes td:nth-child(3) { width: 62px; padding-right: 4px; text-align: right; }
.quotes th:first-child { padding-left: 6px; }
.quotes th + th { border-left: 1px solid #e3e8ee; }
.quotes td { background: #f0fff0; color: #0000f0; }
.quotes td + td { border-left: 1px solid #c8c8c8; }
.quotes td:first-child { padding-left: 4px; color: #000; }
.quotes svg { width: 11px; height: 11px; margin-right: 5px; vertical-align: -1px; }
.quotes .down td + td { color: #f00000; }
.quotes .khaki td { background: #f0e68c; }
.quotes .aqua td { background: #afeeee; }

/* Tabs */
.tabs { flex: none; display: flex; height: 20px; border-top: 1px solid #000; color: #707070; }
.tabs button { position: relative; height: 18px; padding: 0 9px; white-space: nowrap; }
.tabs button:not([aria-selected])::after { content: ""; position: absolute; right: -1px; top: 4px; width: 1px; height: 11px; background: #707070; }
.tabs [aria-selected] { height: 19px; margin-top: -1px; background: #fff; color: #000; border: 1px solid #000; border-top-color: #fff; }
.sidebar .tabs { padding-left: 3px; }
.sidebar .tabs [aria-selected] { padding: 0 7px; }

/* Navigator tree */
.node { display: flex; align-items: center; height: 18px; white-space: nowrap; }
.node svg { flex: none; width: 18px; height: 18px; margin-right: 5px; }
.root { margin-top: 1px; padding-left: 5px; }
.root svg { width: 16px; height: 16px; margin-right: 6px; }
.branch { margin-left: 13px; background: repeating-linear-gradient(#777 0 1px, transparent 1px 2px) 0 0 / 1px calc(100% - 9px) no-repeat; }
.leaf { margin-left: 21px; }
.stem { width: 7px; height: 1px; background: repeating-linear-gradient(90deg, #777 0 1px, transparent 1px 2px); }
.leaf .stem { width: 12px; }
.expander {
  width: 9px; height: 9px; margin-left: -4px; border: 1px solid #919191;
  background: linear-gradient(#1c3c8c, #1c3c8c) center / 5px 1px no-repeat, linear-gradient(#fff, #dcdcdc);
}
.plus { background: linear-gradient(#1c3c8c, #1c3c8c) center / 5px 1px no-repeat, linear-gradient(#1c3c8c, #1c3c8c) center / 1px 5px no-repeat, linear-gradient(#fff, #dcdcdc); }

/* Chart */
.chart-column { flex: 1; display: flex; flex-direction: column; min-width: 0; border-left: 1px solid #696969; margin-right: 1px; }
.chart { flex: 1; display: flex; flex-direction: column; min-height: 0; padding: 3px 0 0 3px; background: #000; color: #fff; font-size: 9px; }
.chart-body { flex: 1; display: flex; min-height: 0; }
.plot { position: relative; flex: 1; min-width: 0; border: 1px solid #fff; }
.plot > #plot { display: block; width: 100%; height: 100%; }
.chart-title, .chart-expert { position: absolute; top: 0; display: flex; align-items: center; height: 15px; white-space: pre; }
.chart-title { left: 2px; gap: 6px; }
.chart-title i { border: 4px solid transparent; border-top-color: #fff; border-bottom: 0; }
.chart-expert { top: 1px; right: 4px; gap: 2px; }
.prices { flex: none; width: 43px; height: 100%; fill: #fff; overflow: visible; }
.prices .current { fill: #000; }
.times { display: flex; height: 17px; overflow: hidden; }
.times li { flex: none; width: 64px; white-space: nowrap; line-height: 15px; background: linear-gradient(#fff, #fff) 1px 0 / 1px 3px no-repeat; padding-top: 1px; }
.chart-tabs { height: 21px; border-top-color: #fff; box-shadow: inset 0 1px #f0f0f0, inset 0 2px #000; padding: 1px 0 0 3px; }
.chart-tabs button { padding: 0 10px 0 9px; }
.chart-tabs [aria-selected] { margin-top: 0; padding: 0 9px 0 8px; }
.tab-scroll { display: flex; gap: 13px; margin: 6px 6px 0 auto; }
.tab-scroll i { width: 4px; height: 8px; border: 4px solid transparent; }
.tab-scroll .left { border-left: 0; border-right-color: #888; }
.tab-scroll .right { border-right: 0; border-left-color: #888; }

/* Terminal */
.terminal { flex: none; display: flex; height: 135px; padding: 5px 2px 2px 1px; border-bottom: 1px solid #a0a0a0; }
.terminal-side { display: flex; flex-direction: column; width: 14px; }
.terminal-side button { height: 11px; width: 12px; line-height: 8px; }
.terminal-side h2 { flex: 1; margin-top: 3px; width: 13px; line-height: 13px; color: #44566a; writing-mode: vertical-rl; transform: rotate(180deg); background: linear-gradient(#bccbdb, #d9e5f2); }
.terminal-main { flex: 1; display: flex; flex-direction: column; min-width: 0; border-left: 1px solid #a0a0a0; border-top: 1px solid #a0a0a0; }
.log-area { flex: 1; display: flex; min-height: 0; background: #fff; overflow: hidden; }
.log { align-self: flex-start; flex: 1; }
.log th:first-child { width: 159px; padding-left: 6px; border-right: 1px solid #e0e4e8; }
.log th + th { padding-left: 7px; }
.log td:first-child { padding-left: 6px; border-right: 1px solid #c8c8c8; }
.log td + td { padding-left: 5px; }
.log tbody tr:nth-child(odd) { background: #eaeaea; }
.dot { display: inline-block; width: 7px; height: 7px; margin-right: 9px; border-radius: 50%; border: 1px solid #808080; background: #bcbcbc; }
.scrollbar { display: flex; flex-direction: column; align-items: center; width: 17px; padding: 7px 0; background: #f2f2f2; }
.arrow-up { border: 3px solid transparent; border-bottom-color: #333; border-top: 0; }
.arrow-down { margin-top: auto; border: 3px solid transparent; border-top-color: #333; border-bottom: 0; }
.thumb { width: 15px; height: 15px; margin-top: 8px; border: 1px solid #979797; background: linear-gradient(90deg, #f4f4f4, #d0d0d0); }
.terminal-tabs { height: 21px; padding-left: 2px; }
.terminal-tabs b { color: #e80000; font-size: 9px; line-height: 9px; }

/* Status bar */
.status { flex: none; display: flex; align-items: center; height: 21px; padding: 2px 0 0 2px; }
.status > span { height: 18px; line-height: 18px; white-space: nowrap; padding-left: 5px; border-left: 1px solid #a0a0a0; }
.status .help { flex: 1; padding-left: 0; border-left: 0; }
.status .profile { width: 116px; }
.status .date { width: 102px; }
.status .price { width: 70px; }
.status .volume { width: 66px; }
.status .traffic { display: flex; align-items: center; justify-content: space-between; width: 162px; padding-right: 38px; }

/* Taskbar */
.taskbar {
  flex: none; display: flex; align-items: center; height: 40px; border-top: 1px solid #3c4c60; box-shadow: inset 0 1px #c8dcf0;
  background: linear-gradient(90deg, #6f8ba8 0, #8aa6c4 60px, #b0d2f6 110px, #b2d6fc 620px, #a6cbf2 780px, #b4d8fc 900px, #a8ccf0 1060px, #8ca8c6 1100px, #8299b4 100%);
}
.task { display: flex; flex: none; align-items: center; justify-content: center; width: 60px; height: 39px; margin-right: 2px; }
.task svg { width: 32px; height: 32px; }
.start { width: 54px; margin-right: 5px; }
.start svg { width: 38px; height: 38px; }
.open { border: 1px solid #53708f; border-radius: 3px; box-shadow: inset 0 0 0 1px #dcecfb; background: linear-gradient(#d4e6f8, #b8d4f0 50%, #accbec); }
.active { background: linear-gradient(#fff, #e8f2fc 50%, #dcebfa); }
.tray { display: flex; align-items: center; gap: 8px; margin-left: auto; color: #fff; }
.lang { margin-right: 7px; font-size: 12px; }
.tray-more { margin-right: 3px; }
.clock { display: flex; flex-direction: column; align-items: center; width: 78px; font-size: 12px; line-height: 17px; }
.show-desktop { width: 14px; height: 39px; border: 1px solid #3f5a78; box-shadow: inset 0 0 0 1px #c4d8ec; background: linear-gradient(90deg, #8ca8c4, #5c7894); }
```
FILE: chart.js
```js
// High and low of every five-minute bar, in thirds of a pixel.
const bars = `1182 1205,1125 1202,1125 1176,1107 1161,1116 1199,1116 1172,1149 1166,1143 1166,1116 1176,1116 1149,1122 1149,1119 1131,1119 1155,1137 1152,1122 1161,1110 1140,1090 1134,1090 1113,1098 1134,1104 1166,1071 1146,1074 1116,1090 1125,1090 1119,1090 1143,1090 1119,1092 1131,1095 1143,1110 1155,1131 1158,1131 1161,1125 1163,1140 1164,1140 1166,1116 1158,1113 1170,1119 1137,1131 1146,1098 1146,1110 1146,1107 1134,1110 1175,1149 1196,1137 1221,1137 1269,1083 1266,1090 1134,1011 1113,990 1064,963 1014,1002 1044,1002 1101,1065 1140,1053 1128,1047 1104,1050 1101,1047 1110,1059 1140,1008 1128,1029 1128,1056 1107,1077 1167,1086 1182,1092 1146,1020 1122,960 1059,855 1008,849 951,921 972,888 971,912 972,939 987,864 966,861 930,864 915,741 891,840 930,819 933,801 855,843 888,866 942,891 987,966 1020,987 1059,1029 1080,996 1041,1017 1065,795 1107,711 852,783 951,726 870,789 894,840 888,840 945,876 960,870 1011,948 1032,921 984,900 966,816 918,813 900,801 882,840 912,816 900,783 825,768 816,756 807,759 816,747 837,741 858,759 843,741 804,738 804,726 780,714 759,720 810,726 825,693 768,720 810,732 813,732 792,672 765,639 705,513 885,393 555,336 441,285 414,288 393,210 354,225 330,285 426,324 459,336 408,324 393,351 459,411 516,438 513,486 561,516 579,495 582,516 576,483 552,486 630,597 723,660 717,696 756,663 750,618 708,537 645,510 639,606 687,618 720,570 711,510 642,414 522,411 489,447 495,468 543,465 546,456 630,570 669,564 726,579 684,525 630,555 609,552 597,564 621,558 630,588 684,636 705,657 690,645 684,627 660,630 672,612 666,603 639,570 624,510 597,540 594,579 612,603 690,633 690,660 696,669 711,693 720,681 708,693 723,687 729,
702 738,618 735,633 682,639 663,639 678,636 696,636 663,633 666,624 648,579 642,594 615,594 624,621 657,648 675,657 690,669 699,675 696,672 723,717 771,762 783,768 798,765 789,753 780,735 768,756 810,759 819,756 777,735 777,714 741,678 726,681 726,705 729,693 735,720 738,732 777,768 819,786 837,765 852,747 807,732 792,756 786,762 810,777 804,789 816,783 816,801 828,789 819,789 828,795 837,786 825,780 810,771 792,774 816,762 810,777 816,795 831,744 831,753 783,768 792,753 816,759 810,765 798,753 807,795 819,789 831,801 825,786 837,789 816,762 816,768 783,753 780,717 762,738 777,687 792,666 720,633 681,654 693,657 708,666 702,672 708,681 726,684 711,693 750,654 729,486 675,474 552,468 537,435 522,483 540,486 531,384 489,330 420,378 414,390 426,396 420,390 501,468 516,486 552,465 504,465 486,474 507,480 501,483 522,459 486,459 522,462 513,456 504,489 510,480 516,474 504,465 486,465 480,468 495,429 489,411 441,390 432,366 426,369 432,390 420,402 438,399 435,402 435,417 453,429 444,426 447,417 441,405 447,390 432,393 414,393 405,390 411,396 420,360 414,357 402,315 387,327 381,351 393,303 372,288 333,330 453,360 438,348 396,378 441,396 435,423 522,498 651,528 597,519 579,564 702,672 723,597 681,576 648,570 693,621 702,525 630,519 609,552 723,687 756,627 711,663 711,612 717,477 621,522 606,582 696,624 723,711 810,699 762,642 738,669 753,735 813,780 837,801 882,849 954,798 918,822 918,819 918,780 849,765 840,708 792,693 819,753 864,639 921,741 867,642 792,645 711,426 660,357 474,
402 489,411 477,459 540,429 528,492 537,486 543,465 555,447 540,498 600,483 567,465 543,459 504,459 534,471 555,483 528,477 513,468 510,483 561,468 561,516 594,471 576,423 534,483 594,531 588,510 597,471 549,489 561,477 537,477 540,513 558,519 588,555 630,564 624,555 603,555 588,501 636,477 702,486 573,432 543,417 513,342 507,276 402,333 438,360 435,273 399,252 360,249 372,330 393,336 387,315 396,306 414,81 333,141 201,108 183,108 231,129 210,174 213,156 237,126 234,126 183,162 273,237 387,309 366,291 354`
  .split(",").map(pair => pair.trim().split(" ").map(v => Math.round(v / 3) - 5));

const levels = [
  [13, "137.260"], [46, "137.210"], [81, "137.155"], [116, "137.100"], [152, "137.045"], [187, "136.990"], [222, "136.935"],
  [255, "136.885"], [290, "136.830"], [325, "136.775"], [358, "136.725"], [393, "136.670"], [428, "136.615"]
];
const current = [96, "137.132"];
const GRID = 32;

const add = (parent, name, attrs, text) => {
  const node = document.createElementNS("http://www.w3.org/2000/svg", name);
  for (const key in attrs) node.setAttribute(key, attrs[key]);
  if (text) node.textContent = text;
  parent.append(node);
};

const plot = document.getElementById("plot");
const prices = document.getElementById("prices");

function draw() {
  plot.replaceChildren();
  prices.replaceChildren();
  const width = plot.clientWidth;
  const height = plot.clientHeight;
  let grid = "";
  for (let x = GRID; x < width; x += GRID) grid += `M${x}.5 0V${height}`;
  for (const [y] of levels) grid += `M1 ${y}.5H${width}`;
  add(plot, "path", { d: grid, stroke: "#778899", "stroke-dasharray": "3 3", "shape-rendering": "crispEdges" });
  add(plot, "path", { d: `M0 ${current[0]}.5H${width}`, stroke: "#778899" });
  const d = bars.map(([high, low], i) => `M${i * 2} ${high}h1V${low}h-1z`).join("");
  add(plot, "path", { d, fill: "#00ff00", "shape-rendering": "crispEdges" });
  const last = bars.length * 2;
  add(plot, "path", { d: `M${last - 5} 0h10l-5 5z`, fill: "#778899" });

  for (const [y, label] of levels) {
    add(prices, "path", { d: `M0 ${y + 1}.5h2`, stroke: "#fff" });
    add(prices, "text", { x: 5, y: y + 4 }, label);
  }
  add(prices, "rect", { x: 1, y: 91, width: 41, height: 11 });
  add(prices, "text", { x: 5, y: 100, class: "current" }, current[1]);
}
draw();
window.addEventListener("resize", draw);
```
